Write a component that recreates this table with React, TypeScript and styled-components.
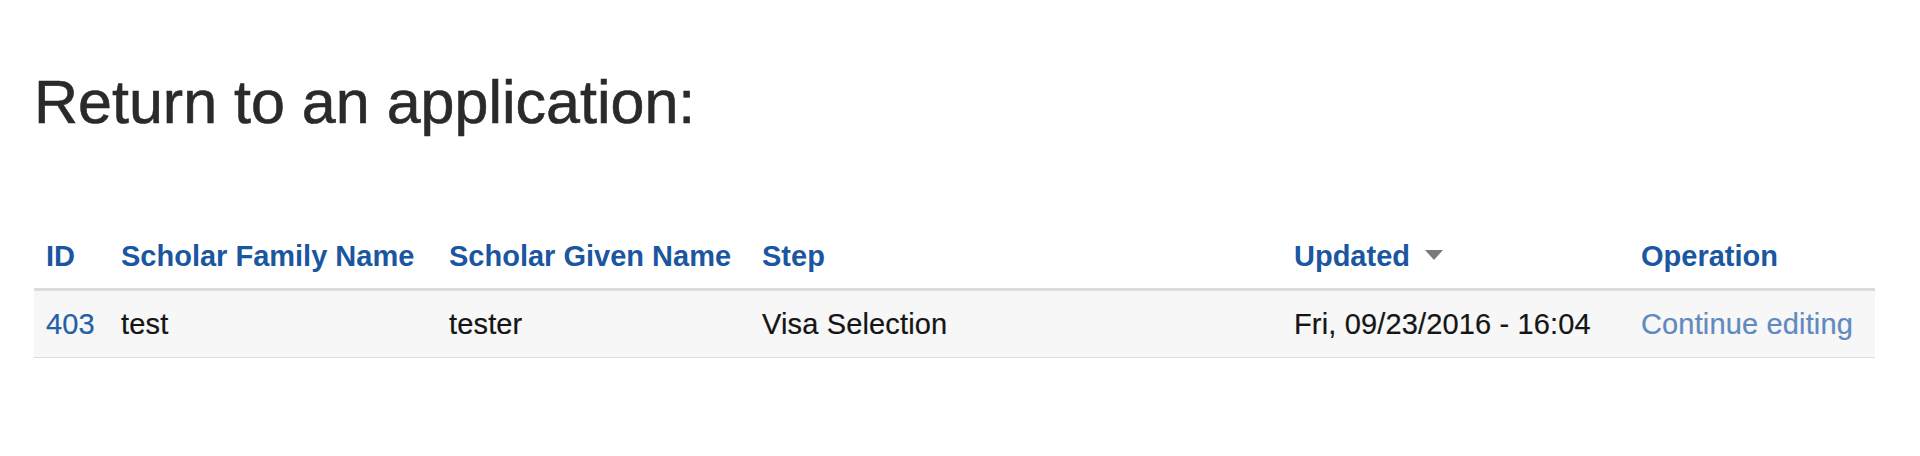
import styled, { createGlobalStyle } from "styled-components";

const GlobalStyle = createGlobalStyle`
  html, body {
    margin: 0;
    padding: 0;
    background: #ffffff;
  }
  body {
    font-family: "Liberation Sans", Arial, Helvetica, sans-serif;
  }
`;

const Page = styled.div`
  width: 1841px;
  margin-left: 34px;
  padding-top: 72px;
  display: flex;
  flex-direction: column;
  gap: 98px;
`;

const Title = styled.h1`
  margin: 0;
  font-size: 61px;
  line-height: 60px;
  font-weight: 400;
  color: #2a2a2a;
  -webkit-text-stroke: 0.6px #2a2a2a;
`;

const Table = styled.table`
  width: 100%;
  table-layout: fixed;
  border-collapse: collapse;
  font-size: 29px;
  line-height: 36px;
`;

const HeadCell = styled.th`
  text-align: left;
  padding: 8px 12px 14px;
  border-bottom: 3px solid #dcdcdc;
  white-space: nowrap;
`;

const SortLink = styled.a`
  color: #1b57a1;
  font-weight: 700;
  text-decoration: none;
  display: inline-flex;
  align-items: center;
  gap: 15px;
`;

const SortArrow = styled.span`
  display: inline-block;
  width: 0;
  height: 0;
  border-left: 9px solid transparent;
  border-right: 9px solid transparent;
  border-top: 10px solid #7a7a7a;
  margin-bottom: 2px;
`;

const Row = styled.tr`
  background: #f7f7f7;
  border-bottom: 1px solid #dddddd;
`;

const Cell = styled.td`
  padding: 15px 12px;
  color: #151515;
  white-space: nowrap;
  letter-spacing: 0.15px;
  -webkit-text-stroke: 0.2px currentColor;
`;

const RowLink = styled.a<{ $muted?: boolean }>`
  color: ${(p) => (p.$muted ? "#6189c0" : "#2360a8")};
  text-decoration: none;
`;

const columns = [
  { label: "ID", width: 75 },
  { label: "Scholar Family Name", width: 328 },
  { label: "Scholar Given Name", width: 313 },
  { label: "Step", width: 532 },
  { label: "Updated", width: 347, sorted: true },
  { label: "Operation", width: 246 },
];

export default function App() {
  return (
    <>
      <GlobalStyle />
      <Page>
        <Title>Return to an application:</Title>
        <Table>
          <colgroup>
            {columns.map((c) => (
              <col key={c.label} style={{ width: c.width }} />
            ))}
          </colgroup>
          <thead>
            <tr>
              {columns.map((c) => (
                <HeadCell key={c.label}>
                  <SortLink href="#">
                    {c.label}
                    {c.sorted && <SortArrow />}
                  </SortLink>
                </HeadCell>
              ))}
            </tr>
          </thead>
          <tbody>
            <Row>
              <Cell>
                <RowLink href="#">403</RowLink>
              </Cell>
              <Cell>test</Cell>
              <Cell>tester</Cell>
              <Cell>Visa Selection</Cell>
              <Cell>Fri, 09/23/2016 - 16:04</Cell>
              <Cell>
                <RowLink href="#" $muted>
                  Continue editing
                </RowLink>
              </Cell>
            </Row>
          </tbody>
        </Table>
      </Page>
    </>
  );
}
